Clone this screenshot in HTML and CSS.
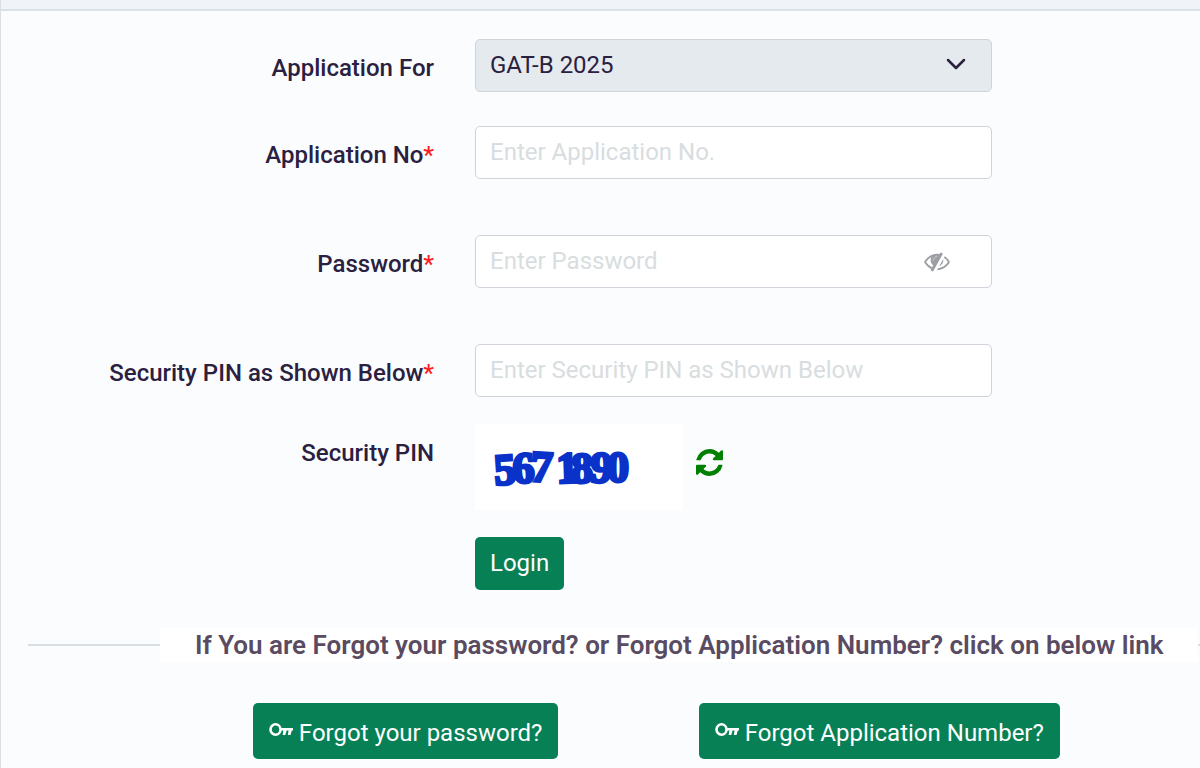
FILE: index.html
```html
<!DOCTYPE html>
<html lang="en">
<head>
    <meta charset="UTF-8">
    <meta name="viewport" content="width=device-width, initial-scale=1.0">
    <title>Login</title>
    <link rel="stylesheet" href="styles.css">
</head>
<body>
    <svg class="sprite" aria-hidden="true">
        <symbol id="icon-key" viewBox="0 0 24 14">
            <ellipse cx="6.500" cy="6.500" rx="5" ry="5.200" fill="none" stroke="currentColor" stroke-width="2.600"/>
            <path d="M11 5h13v2.600h-1.200L21.500 12h-2.600l.6-4.400h-1.900L16.300 12h-2.600l.6-4.400H11z" fill="currentColor"/>
        </symbol>
    </svg>

    <div class="card">
        <div class="card-header"></div>

        <form class="login-form">
            <div class="form-row">
                <label for="appFor">Application For</label>
                <div class="field">
                    <select id="appFor" class="form-control" disabled>
                        <option>GAT-B 2025</option>
                    </select>
                    <svg class="chevron" viewBox="0 0 20 12"><path d="M2 2l8 8 8-8" fill="none" stroke="currentColor" stroke-width="2.500" stroke-linecap="round" stroke-linejoin="round"/></svg>
                </div>
            </div>

            <div class="form-row spaced">
                <label for="appNo">Application No<span class="required">*</span></label>
                <div class="field">
                    <input type="text" id="appNo" class="form-control" placeholder="Enter Application No.">
                </div>
            </div>

            <div class="form-row spaced">
                <label for="password">Password<span class="required">*</span></label>
                <div class="field">
                    <input type="password" id="password" class="form-control" placeholder="Enter Password">
                    <button type="button" class="toggle-eye" aria-label="Show password">
                        <svg viewBox="0 256 1792 1408"><path fill="currentColor" d="M555 1335l78-141q-87-63-136-159t-49-203q0-121 61-225-229 117-381 353 167 258 427 375zm389-759q0-20-14-34t-34-14q-125 0-214.500 89.500T592 832q0 20 14 34t34 14 34-14 14-34q0-86 61-147t147-61q20 0 34-14t14-34zm363-191q0 7-1 9-106 189-316 567t-315 566l-49 89q-10 16-28 16-12 0-134-70-16-10-16-28 0-12 44-87-143-65-263.500-173T20 1029Q0 998 0 960t20-69q153-235 380-371t496-136q89 0 180 17l54-97q10-16 28-16 5 0 18 6t31 15.500 33 18.500 31.500 18.500T1291 358q16 10 16 27zm37 447q0 139-79 253.500T1056 1250l280-502q8 45 8 84zm448 128q0 35-20 69-39 64-109 145-150 172-347.500 267T896 1536l74-132q212-18 392.500-137T1664 960q-115-179-282-294l63-112q95 64 182.500 153T1772 891q20 34 20 69z"/><path fill="currentColor" d="M560 620q120-130 330-130h190l-400 720q-190-130-190-350 0-140 70-240z" opacity=".7"/></svg>
                    </button>
                </div>
            </div>

            <div class="form-row">
                <label for="pin">Security PIN as Shown Below<span class="required">*</span></label>
                <div class="field">
                    <input type="text" id="pin" class="form-control" placeholder="Enter Security PIN as Shown Below">
                </div>
            </div>

            <div class="form-row">
                <div class="label">Security PIN</div>
                <div class="captcha">
                    <svg class="captcha-image" viewBox="0 0 208 86" role="img" aria-label="Security PIN">
                        <text class="captcha-text" x="20 38 55 82 96 115 132" y="61 59 57 59 59 58 58" rotate="-4 -2 3 -2 0 2 0">5671890</text>
                    </svg>
                    <button type="button" class="refresh" aria-label="Refresh PIN">
                        <svg viewBox="0 0 1536 1536"><path fill="currentColor" d="M1511 928q0 5-1 7-64 268-268 434.500T764 1536q-146 0-282.500-55T238 1324l-129 129q-19 19-45 19t-45-19-19-45V960q0-26 19-45t45-19h448q26 0 45 19t19 45-19 45l-137 137q71 66 161 102t187 36q134 0 250-65t186-179q11-17 53-117 8-23 30-23h192q13 0 22.500 9.500t9.500 22.500zm25-800v448q0 26-19 45t-45 19h-448q-26 0-45-19t-19-45 19-45l138-138Q969 256 768 256q-134 0-250 65T332 500q-11 17-53 117-8 23-30 23H50q-13 0-22.500-9.500T18 608v-7q65-268 270-434.500T768 0q146 0 284 55.500T1297 212l130-129q19-19 45-19t45 19 19 45z"/></svg>
                    </button>
                </div>
            </div>

            <div class="form-row">
                <button type="submit" class="btn btn-login">Login</button>
            </div>
        </form>

        <div class="divider">
            <span>If You are Forgot your password? or Forgot Application Number? click on below link</span>
        </div>

        <div class="links">
            <a href="#" class="btn btn-link"><svg class="key"><use href="#icon-key"/></svg>Forgot your password?</a>
            <a href="#" class="btn btn-link"><svg class="key"><use href="#icon-key"/></svg>Forgot Application Number?</a>
        </div>
    </div>
</body>
</html>
```
FILE: styles.css
```css
* {
    margin: 0;
    padding: 0;
    box-sizing: border-box;
}

body {
    font-family: Roboto, "Liberation Sans", sans-serif;
    font-size: 24px;
    line-height: 30px;
    color: #2a2040;
    background: #fbfcfe;
    overflow-x: hidden;
}

.sprite {
    display: none;
}

.card {
    min-height: 100vh;
    border-left: 1px solid #dadfe5;
}

.card-header {
    height: 11px;
    background: #f0f3f8;
    border-bottom: 2px solid #dce1e7;
}

.login-form {
    padding-top: 28px;
}

.form-row {
    display: grid;
    grid-template-columns: 433fr 517fr 167fr;
    column-gap: 41px;
    align-items: start;
    margin-bottom: 27px;
}

.form-row:first-child {
    margin-bottom: 34px;
}

.form-row.spaced {
    margin-bottom: 56px;
}

.form-row label,
.form-row .label {
    padding-top: 14px;
    text-align: right;
    font-weight: 500;
}

.required {
    color: #ff2020;
}

.field {
    position: relative;
}

.form-control {
    display: block;
    width: 100%;
    height: 53px;
    padding: 0 14px 2px;
    border: 1px solid #ced4da;
    border-radius: 5px;
    background: #fff;
    color: #2a2040;
    font: inherit;
    appearance: none;
}

.form-control::placeholder {
    color: #d8dde0;
    opacity: 1;
}

.form-control:disabled {
    background: #e5eaee;
    opacity: 1;
}

.chevron {
    position: absolute;
    top: 19px;
    right: 26px;
    width: 20px;
    height: 12px;
}

.toggle-eye {
    position: absolute;
    top: 17px;
    right: 42px;
    border: none;
    background: none;
    color: #9b9fa3;
    cursor: pointer;
}

.toggle-eye svg {
    display: block;
    width: 26px;
    height: 20px;
}

.captcha {
    display: flex;
    align-items: flex-start;
    gap: 13px;
}

.captcha-image {
    width: 208px;
    height: 86px;
    background: #fff;
}

.captcha-text {
    font-family: "Liberation Serif", serif;
    font-size: 44px;
    font-weight: 700;
    fill: #0a32c8;
    stroke: #0a32c8;
    stroke-width: 3;
}

.refresh {
    margin-top: 25px;
    border: none;
    background: none;
    color: #008000;
    cursor: pointer;
}

.refresh svg {
    display: block;
    width: 27px;
    height: 27px;
}

.btn {
    border: none;
    border-radius: 5px;
    background: #078055;
    color: #fff;
    font: inherit;
    text-decoration: none;
    cursor: pointer;
}

.btn-login {
    grid-column: 2;
    justify-self: start;
    height: 53px;
    padding: 0 15px 2px;
}

.divider {
    display: flex;
    align-items: center;
    padding-left: 27px;
    margin-top: 38px;
    font-size: 26px;
    font-weight: 600;
    color: #594b62;
    white-space: nowrap;
}

.divider::before,
.divider::after {
    content: "";
    height: 2px;
    background: #d9dee3;
}

.divider::before {
    flex: 0 0 132px;
}

.divider::after {
    flex: 1;
}

.divider span {
    padding: 2px 35px;
    background: #fff;
}

.links {
    display: grid;
    grid-template-columns: 1fr 1fr;
    justify-items: center;
    margin-top: 41px;
    padding: 0 7% 0 14%;
}

.btn-link {
    padding: 15px 16px 11px;
    white-space: nowrap;
}

.key {
    width: 24px;
    height: 14px;
    margin-right: 6px;
    vertical-align: 4px;
}
```
